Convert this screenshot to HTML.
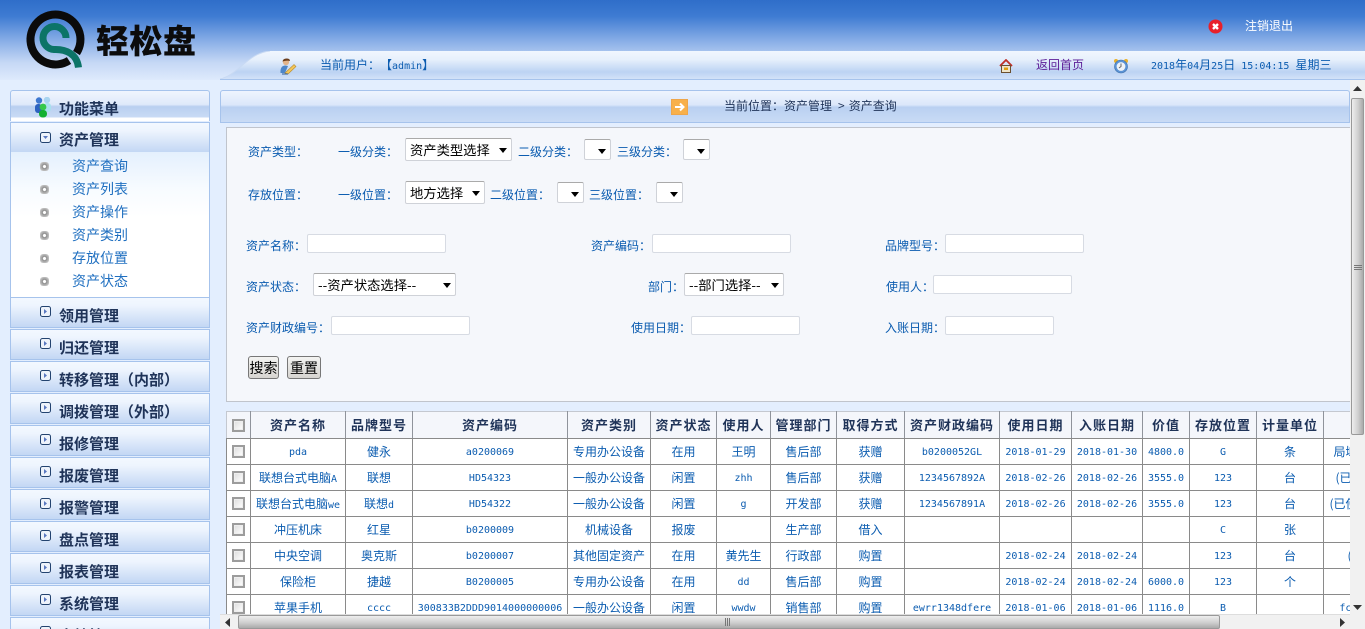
<!DOCTYPE html>
<html lang="zh">
<head>
<meta charset="utf-8">
<title>轻松盘</title>
<style>
html,body{margin:0;padding:0;width:1365px;height:629px;overflow:hidden;background:#e3eefe}
body{position:relative;font:12px "DejaVu Sans Mono","WenQuanYi Zen Hei","Noto Sans CJK SC",monospace;color:#0b5cb0;text-spacing-trim:space-all}
.a{position:absolute;white-space:nowrap}
#hdr{position:absolute;left:0;top:0;width:1365px;height:80px;background:linear-gradient(#2f6ec9 0,#3e7bd2 20%,#86ace6 50%,#c5d8f5 78%,#deeafc 100%)}
.cj{font-family:"WenQuanYi Zen Hei","Noto Sans CJK SC",sans-serif}
.mh{position:absolute;left:10px;width:198px;height:29px;border:1px solid #a6c3ec;background:linear-gradient(#f3f8ff 0,#eef5fe 25%,#c3d7f4 100%);color:#1f3358;font:bold 15px/32px "WenQuanYi Zen Hei","Noto Sans CJK SC",sans-serif}
.mh span{position:absolute;left:48px;top:2px;white-space:nowrap}
.mh svg{position:absolute;left:29px;top:2px}
.si{position:absolute;left:72px;font:14px/18px "WenQuanYi Zen Hei","Noto Sans CJK SC",sans-serif;color:#1f6fc0}
.dot{position:absolute;left:40px;width:9px;height:9px;border-radius:3px;background:radial-gradient(#fff 0 20%,#8f8f8f 30%,#b5b5b5 60%,#e3e3e3 100%)}
.lb{position:absolute;margin-top:1px;white-space:nowrap;font:12px/14px "WenQuanYi Zen Hei","Noto Sans CJK SC",sans-serif;color:#0b5cb0}
.inp{position:absolute;height:17px;background:#fff;border:1px solid #d7dbe3;border-radius:2px}
.sel{position:absolute;background:#fff;border:1px solid #cfd2d8;border-top-color:#aaa;border-radius:2px;font:13.3px/21px "WenQuanYi Zen Hei","Noto Sans CJK SC",sans-serif;color:#000;padding-left:4px;box-sizing:border-box;white-space:nowrap}
.sel:after{content:"";position:absolute;right:4px;top:9px;border:4px solid transparent;border-top:5px solid #000;border-bottom:0}
.btn{position:absolute;box-sizing:border-box;height:23px;border:1px solid #777;border-radius:3px;background:linear-gradient(#f4f4f2,#d6d4d0);font:14px/23px "WenQuanYi Zen Hei","Noto Sans CJK SC",sans-serif;color:#000;text-align:center}
#tw{position:absolute;left:226px;top:411px;width:1124px;height:203px;overflow:hidden;background:#fff}
table{border-collapse:collapse;table-layout:fixed;width:1177px;position:absolute;left:0;top:0}
td,th{border:1px solid #8a8a8a;padding:0;text-align:center;vertical-align:middle;overflow:hidden;white-space:nowrap}
td{height:23px;padding-top:2px;font:10px/14px "DejaVu Sans Mono","WenQuanYi Zen Hei","Noto Sans CJK SC",monospace;color:#0b5cb0}
td b{font:12px/14px "WenQuanYi Zen Hei","Noto Sans CJK SC",sans-serif}
th{height:26px;background:#f4f6fb;border-color:#c4c8d0;border-right-color:#8f939b;color:#1f3358;font:bold 13px/16px "WenQuanYi Zen Hei","Noto Sans CJK SC",sans-serif;letter-spacing:1px;border-bottom-color:#8a8a8a}
.cb{display:block;width:9px;height:9px;margin:0 auto;border:2px solid #9c9c9c;background:linear-gradient(135deg,#ddd,#fff);outline:1px solid #eee;outline-offset:-3px}
td .cb{position:relative;top:-1px}
#vs{position:absolute;left:1350px;top:80px;width:15px;height:534px;background:#f1f1f1}
#hs{position:absolute;left:220px;top:614px;width:1130px;height:15px;background:#f1f1f1;border-top:1px solid #ddd;box-sizing:border-box}
#corner{position:absolute;left:1350px;top:614px;width:15px;height:15px;background:#f1f1f1}
.vt{position:absolute;left:1px;top:18px;width:13px;height:337px;background:linear-gradient(90deg,#eee,#cfcfcf 55%,#aaa);border:1px solid #999;box-sizing:border-box;border-radius:2px}
.ht{position:absolute;left:18px;top:0;width:982px;height:14px;background:linear-gradient(#eee,#cfcfcf 55%,#aaa);border:1px solid #999;box-sizing:border-box;border-radius:2px}
</style>
</head>
<body>
<div id="hdr"></div>

<!-- logo -->
<svg class="a" style="left:20px;top:5px" width="80" height="72" viewBox="20 5 80 72">
<path d="M69 60.5A25 25 0 1 1 76.5 53" fill="none" stroke="#0b0b0b" stroke-width="8"/>
<path d="M66 38A11.5 11.5 0 1 0 54 49.5C66 49 77 54 78.5 67.5" fill="none" stroke="#0c7467" stroke-width="7"/>
</svg>
<div class="a" style="left:96px;top:18px;font:900 33px/42px 'Noto Sans CJK SC',sans-serif;color:#0c0c0c;letter-spacing:.5px">轻松盘</div>

<!-- top tab bar -->
<svg class="a" style="left:220px;top:51px" width="1145" height="29" viewBox="0 0 1145 29">
<defs><linearGradient id="g1" x1="0" y1="0" x2="0" y2="1"><stop offset="0" stop-color="#f1f6fe"/><stop offset=".3" stop-color="#e7f0fc"/><stop offset=".75" stop-color="#bcd3f3"/><stop offset="1" stop-color="#d3e2f8"/></linearGradient></defs>
<path d="M0 28C18 24 28 2 50 0H1145V28Z" fill="url(#g1)"/>
<path d="M0 28C18 24 28 2 50 0" fill="none" stroke="#c9daf3"/>
<path d="M0 28.5H1145" stroke="#a6c3ec"/>
</svg>

<!-- user icon -->
<svg class="a" style="left:279px;top:58px" width="18" height="17" viewBox="0 0 18 17">
<circle cx="7" cy="4" r="3.2" fill="#e3b48a"/><path d="M3.5 3.5Q4 .5 7.5.5 11 .5 11 3 8 2 3.5 3.5Z" fill="#6b3d1c"/>
<path d="M1.5 15Q1 8 6 7.5L9 8 6 15Z" fill="#4d86c9"/>
<path d="M6 15L15 6.5 17 8.5 9 16Z" fill="#f3c65a" stroke="#b98a2a" stroke-width=".6"/>
<path d="M3 16H9" stroke="#2a5d9d"/>
</svg>
<div class="lb" style="left:320px;top:58px;margin-top:0">当前用户：<span style="font:10px/14px 'DejaVu Sans Mono','WenQuanYi Zen Hei',monospace"><span class="cj" style="font-size:12px">【</span>admin<span class="cj" style="font-size:12px">】</span></span></div>

<!-- home icon -->
<svg class="a" style="left:999px;top:59px" width="14" height="14" viewBox="0 0 14 14">
<path d="M1 7L7 1 13 7" fill="none" stroke="#c03028" stroke-width="1.8"/>
<rect x="2.5" y="6.5" width="9" height="7" fill="#efe4c8" stroke="#6b5030"/>
<rect x="5" y="8.5" width="4" height="2.5" fill="#e0a010"/>
</svg>
<div class="lb" style="left:1036px;top:58px;margin-top:0;color:#5b1b96">返回首页</div>
<!-- clock icon -->
<svg class="a" style="left:1113px;top:58px" width="16" height="16" viewBox="0 0 16 16">
<circle cx="3" cy="3" r="2" fill="#eab22c"/><circle cx="13" cy="3" r="2" fill="#eab22c"/>
<circle cx="8" cy="8.5" r="6.5" fill="#5b93d5" stroke="#3d6fa8" stroke-width=".6"/>
<circle cx="8" cy="8.5" r="4.4" fill="#eef3f8"/>
<path d="M8 5.5V8.5L6 10" fill="none" stroke="#666"/>
</svg>
<div class="lb" style="left:1151px;top:58px;margin-top:0;font-family:'DejaVu Sans Mono','WenQuanYi Zen Hei',monospace;font-size:10px">2018<span class="cj" style="font-size:12px">年</span>04<span class="cj" style="font-size:12px">月</span>25<span class="cj" style="font-size:12px">日</span> 15:04:15 <span class="cj" style="font-size:12px">星期三</span></div>

<!-- logout -->
<svg class="a" style="left:1208px;top:19px" width="15" height="15" viewBox="0 0 15 15">
<circle cx="7.5" cy="7.5" r="7" fill="#e8202a"/>
<path d="M5 5L10 10M10 5L5 10" stroke="#fff" stroke-width="2.4"/>
</svg>
<div class="lb" style="left:1245px;top:19px;margin-top:0;color:#fff">注销退出</div>

<!-- sidebar -->
<div class="mh" style="top:90px;background:linear-gradient(#f0f5fe 0,#dfe9fa 45%,#b9cff0 52%,#c9dbf5 88%,#fff 88%);border-radius:3px 3px 0 0;border-bottom:0;height:30px">
<svg style="left:24px;top:6px" width="17" height="21" viewBox="0 0 17 21">
<circle cx="4" cy="3.5" r="3.2" fill="#3f78d0"/><circle cx="12" cy="3" r="3.2" fill="#a9d4f0"/><rect x="9" y="6" width="7" height="9" rx="3" fill="#a9e0ee"/><rect x="0" y="7" width="7" height="9" rx="3" fill="#2d62c0"/><circle cx="8" cy="10" r="3.4" fill="#35c84a"/><rect x="4" y="13" width="8" height="7.5" rx="3.5" fill="#12b030"/>
</svg><span style="top:2px">功能菜单</span></div>

<div class="mh" style="top:122px">
<svg width="11" height="11" viewBox="0 0 11 11" style="top:9px"><rect x=".5" y=".5" width="10" height="10" rx="2" fill="#eef3fb" stroke="#23436f"/><path d="M3 4H8L5.5 7Z" fill="#5a78c0"/></svg><span style="top:1px">资产管理</span></div>

<div class="a" style="left:10px;top:152px;width:198px;height:145px;border-left:1px solid #a6c3ec;border-right:1px solid #a6c3ec;background:linear-gradient(#e4f0fd 0,#f7fbff 25%,#fff 45%)"></div>
<i class="dot" style="top:162px"></i><div class="si" style="top:157px">资产查询</div>
<i class="dot" style="top:185px"></i><div class="si" style="top:180px">资产列表</div>
<i class="dot" style="top:208px"></i><div class="si" style="top:203px">资产操作</div>
<i class="dot" style="top:231px"></i><div class="si" style="top:226px">资产类别</div>
<i class="dot" style="top:254px"></i><div class="si" style="top:249px">存放位置</div>
<i class="dot" style="top:277px"></i><div class="si" style="top:272px">资产状态</div>

<div class="mh" style="top:297px"><svg width="11" height="11" viewBox="0 0 11 11" style="top:8px"><rect x=".5" y=".5" width="10" height="10" rx="2" fill="#eef3fb" stroke="#23436f"/><path d="M4 3V8L7 5.5Z" fill="#5a78c0"/></svg><span>领用管理</span></div>
<div class="mh" style="top:329px"><svg width="11" height="11" viewBox="0 0 11 11" style="top:8px"><rect x=".5" y=".5" width="10" height="10" rx="2" fill="#eef3fb" stroke="#23436f"/><path d="M4 3V8L7 5.5Z" fill="#5a78c0"/></svg><span>归还管理</span></div>
<div class="mh" style="top:361px"><svg width="11" height="11" viewBox="0 0 11 11" style="top:8px"><rect x=".5" y=".5" width="10" height="10" rx="2" fill="#eef3fb" stroke="#23436f"/><path d="M4 3V8L7 5.5Z" fill="#5a78c0"/></svg><span>转移管理（内部）</span></div>
<div class="mh" style="top:393px"><svg width="11" height="11" viewBox="0 0 11 11" style="top:8px"><rect x=".5" y=".5" width="10" height="10" rx="2" fill="#eef3fb" stroke="#23436f"/><path d="M4 3V8L7 5.5Z" fill="#5a78c0"/></svg><span>调拨管理（外部）</span></div>
<div class="mh" style="top:425px"><svg width="11" height="11" viewBox="0 0 11 11" style="top:8px"><rect x=".5" y=".5" width="10" height="10" rx="2" fill="#eef3fb" stroke="#23436f"/><path d="M4 3V8L7 5.5Z" fill="#5a78c0"/></svg><span>报修管理</span></div>
<div class="mh" style="top:457px"><svg width="11" height="11" viewBox="0 0 11 11" style="top:8px"><rect x=".5" y=".5" width="10" height="10" rx="2" fill="#eef3fb" stroke="#23436f"/><path d="M4 3V8L7 5.5Z" fill="#5a78c0"/></svg><span>报废管理</span></div>
<div class="mh" style="top:489px"><svg width="11" height="11" viewBox="0 0 11 11" style="top:8px"><rect x=".5" y=".5" width="10" height="10" rx="2" fill="#eef3fb" stroke="#23436f"/><path d="M4 3V8L7 5.5Z" fill="#5a78c0"/></svg><span>报警管理</span></div>
<div class="mh" style="top:521px"><svg width="11" height="11" viewBox="0 0 11 11" style="top:8px"><rect x=".5" y=".5" width="10" height="10" rx="2" fill="#eef3fb" stroke="#23436f"/><path d="M4 3V8L7 5.5Z" fill="#5a78c0"/></svg><span>盘点管理</span></div>
<div class="mh" style="top:553px"><svg width="11" height="11" viewBox="0 0 11 11" style="top:8px"><rect x=".5" y=".5" width="10" height="10" rx="2" fill="#eef3fb" stroke="#23436f"/><path d="M4 3V8L7 5.5Z" fill="#5a78c0"/></svg><span>报表管理</span></div>
<div class="mh" style="top:585px"><svg width="11" height="11" viewBox="0 0 11 11" style="top:8px"><rect x=".5" y=".5" width="10" height="10" rx="2" fill="#eef3fb" stroke="#23436f"/><path d="M4 3V8L7 5.5Z" fill="#5a78c0"/></svg><span>系统管理</span></div>
<div class="mh" style="top:617px"><svg width="11" height="11" viewBox="0 0 11 11" style="top:8px"><rect x=".5" y=".5" width="10" height="10" rx="2" fill="#eef3fb" stroke="#23436f"/><path d="M4 3V8L7 5.5Z" fill="#5a78c0"/></svg><span>文档管理</span></div>

<!-- breadcrumb -->
<div class="a" style="left:220px;top:90px;width:1128px;height:31px;border:1px solid #a6c3ec;border-radius:3px 3px 0 0;background:linear-gradient(#eef4fe 0,#dbe7fa 45%,#b9d0f1 52%,#c9dbf5 100%)"></div>
<svg class="a" style="left:671px;top:99px" width="17" height="16" viewBox="0 0 17 16">
<rect x=".5" y=".5" width="16" height="15" fill="#f8b04a" stroke="#eea64a"/>
<path d="M4 8H12M9 4.5L12.5 8 9 11.5" fill="none" stroke="#fff" stroke-width="2"/>
</svg>
<div class="lb" style="left:724px;top:99px;margin-top:0;color:#1f3358">当前位置：资产管理<span style="margin:0 4px 0 6px">&gt;</span>资产查询</div>

<!-- form panel -->
<div class="a" style="left:226px;top:127px;width:1124px;height:273px;background:#f5f7fb;border:1px solid #c0c4cc;border-right:0"></div>

<div class="lb" style="left:248px;top:144px">资产类型：</div>
<div class="lb" style="left:338px;top:144px">一级分类：</div>
<div class="sel" style="left:405px;top:138px;width:107px;height:23px">资产类型选择</div>
<div class="lb" style="left:518px;top:144px">二级分类：</div>
<div class="sel" style="left:584px;top:139px;width:27px;height:21px"></div>
<div class="lb" style="left:617px;top:144px">三级分类：</div>
<div class="sel" style="left:683px;top:139px;width:27px;height:21px"></div>

<div class="lb" style="left:248px;top:187px">存放位置：</div>
<div class="lb" style="left:338px;top:187px">一级位置：</div>
<div class="sel" style="left:405px;top:181px;width:80px;height:23px">地方选择</div>
<div class="lb" style="left:490px;top:187px">二级位置：</div>
<div class="sel" style="left:557px;top:182px;width:27px;height:21px"></div>
<div class="lb" style="left:589px;top:187px">三级位置：</div>
<div class="sel" style="left:656px;top:182px;width:27px;height:21px"></div>

<div class="lb" style="left:246px;top:238px">资产名称：</div>
<div class="inp" style="left:307px;top:234px;width:137px"></div>
<div class="lb" style="left:591px;top:238px">资产编码：</div>
<div class="inp" style="left:652px;top:234px;width:137px"></div>
<div class="lb" style="left:885px;top:238px">品牌型号：</div>
<div class="inp" style="left:945px;top:234px;width:137px"></div>

<div class="lb" style="left:246px;top:279px">资产状态：</div>
<div class="sel" style="left:313px;top:273px;width:143px;height:23px">--资产状态选择--</div>
<div class="lb" style="left:648px;top:279px">部门：</div>
<div class="sel" style="left:684px;top:273px;width:100px;height:23px">--部门选择--</div>
<div class="lb" style="left:886px;top:279px">使用人：</div>
<div class="inp" style="left:933px;top:275px;width:137px"></div>

<div class="lb" style="left:246px;top:320px">资产财政编号：</div>
<div class="inp" style="left:331px;top:316px;width:137px"></div>
<div class="lb" style="left:631px;top:320px">使用日期：</div>
<div class="inp" style="left:691px;top:316px;width:107px"></div>
<div class="lb" style="left:885px;top:320px">入账日期：</div>
<div class="inp" style="left:945px;top:316px;width:107px"></div>

<div class="btn" style="left:248px;top:356px;width:31px">搜索</div>
<div class="btn" style="left:287px;top:356px;width:34px">重置</div>

<!-- table -->
<div id="tw">
<table>
<colgroup><col style="width:24px"><col style="width:95px"><col style="width:67px"><col style="width:155px"><col style="width:83px"><col style="width:66px"><col style="width:54px"><col style="width:66px"><col style="width:68px"><col style="width:95px"><col style="width:72px"><col style="width:71px"><col style="width:47px"><col style="width:67px"><col style="width:67px"><col style="width:80px"></colgroup>
<tr><th><i class="cb"></i></th><th>资产名称</th><th>品牌型号</th><th>资产编码</th><th>资产类别</th><th>资产状态</th><th>使用人</th><th>管理部门</th><th>取得方式</th><th>资产财政编码</th><th>使用日期</th><th>入账日期</th><th>价值</th><th>存放位置</th><th>计量单位</th><th></th></tr>
<tr><td><i class="cb"></i></td><td>pda</td><td><b>健永</b></td><td>a0200069</td><td><b>专用办公设备</b></td><td><b>在用</b></td><td><b>王明</b></td><td><b>售后部</b></td><td><b>获赠</b></td><td>b0200052GL</td><td>2018-01-29</td><td>2018-01-30</td><td>4800.0</td><td>G</td><td><b>条</b></td><td><b>局域网设备</b></td></tr>
<tr><td><i class="cb"></i></td><td><b>联想台式电脑</b>A</td><td><b>联想</b></td><td>HD54323</td><td><b>一般办公设备</b></td><td><b>闲置</b></td><td>zhh</td><td><b>售后部</b></td><td><b>获赠</b></td><td>1234567892A</td><td>2018-02-26</td><td>2018-02-26</td><td>3555.0</td><td>123</td><td><b>台</b></td><td><b>(已使用中)</b></td></tr>
<tr><td><i class="cb"></i></td><td><b>联想台式电脑</b>we</td><td><b>联想</b>d</td><td>HD54322</td><td><b>一般办公设备</b></td><td><b>闲置</b></td><td>g</td><td><b>开发部</b></td><td><b>获赠</b></td><td>1234567891A</td><td>2018-02-26</td><td>2018-02-26</td><td>3555.0</td><td>123</td><td><b>台</b></td><td><b>(已使用中间)</b></td></tr>
<tr><td><i class="cb"></i></td><td><b>冲压机床</b></td><td><b>红星</b></td><td>b0200009</td><td><b>机械设备</b></td><td><b>报废</b></td><td></td><td><b>生产部</b></td><td><b>借入</b></td><td></td><td></td><td></td><td></td><td>C</td><td><b>张</b></td><td></td></tr>
<tr><td><i class="cb"></i></td><td><b>中央空调</b></td><td><b>奥克斯</b></td><td>b0200007</td><td><b>其他固定资产</b></td><td><b>在用</b></td><td><b>黄先生</b></td><td><b>行政部</b></td><td><b>购置</b></td><td></td><td>2018-02-24</td><td>2018-02-24</td><td></td><td>123</td><td><b>台</b></td><td><b>(已用)</b></td></tr>
<tr><td><i class="cb"></i></td><td><b>保险柜</b></td><td><b>捷越</b></td><td>B0200005</td><td><b>专用办公设备</b></td><td><b>在用</b></td><td>dd</td><td><b>售后部</b></td><td><b>购置</b></td><td></td><td>2018-02-24</td><td>2018-02-24</td><td>6000.0</td><td>123</td><td><b>个</b></td><td></td></tr>
<tr><td><i class="cb"></i></td><td><b>苹果手机</b></td><td>cccc</td><td>300833B2DDD9014000000006</td><td><b>一般办公设备</b></td><td><b>闲置</b></td><td>wwdw</td><td><b>销售部</b></td><td><b>购置</b></td><td>ewrr1348dfere</td><td>2018-01-06</td><td>2018-01-06</td><td>1116.0</td><td>B</td><td></td><td>fcdfsfdf</td></tr>
</table>
</div>

<!-- scrollbars -->
<div id="vs">
<svg class="a" style="left:3px;top:6px" width="9" height="6"><path d="M4.5 0L9 5H0Z" fill="#333"/></svg>
<div class="vt"><svg class="a" style="left:2px;top:166px" width="8" height="6"><path d="M0 .5H8M0 2.5H8M0 4.5H8" stroke="#777"/></svg></div>
<svg class="a" style="left:3px;top:525px" width="9" height="6"><path d="M4.5 5L9 0H0Z" fill="#333"/></svg>
</div>
<div id="hs">
<svg class="a" style="left:5px;top:3px" width="6" height="9"><path d="M0 4.5L5 0V9Z" fill="#333"/></svg>
<div class="ht"><svg class="a" style="left:486px;top:2px" width="8" height="8"><path d="M.5 0V8M2.5 0V8M4.5 0V8" stroke="#777"/></svg></div>
<svg class="a" style="left:1120px;top:3px" width="6" height="9"><path d="M5 4.5L0 0V9Z" fill="#333"/></svg>
</div>
<div id="corner"></div>
</body>
</html>
